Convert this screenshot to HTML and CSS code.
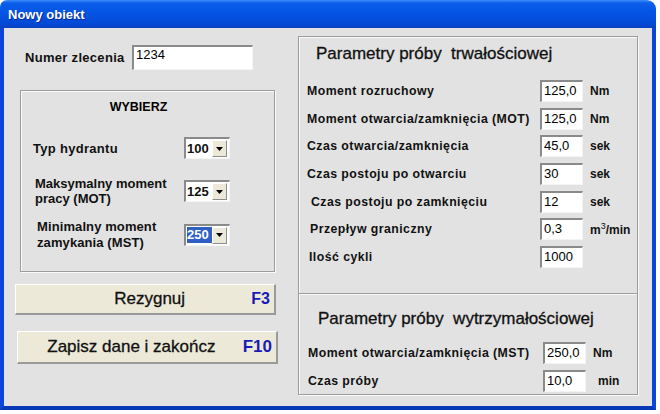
FILE: index.html
```html
<!DOCTYPE html>
<html lang="pl">

<head>
    <meta charset="UTF-8">
    <title>Nowy obiekt</title>
    <link rel="stylesheet" href="styles.css">
</head>

<body>
    <div class="window">
        <div class="titlebar">Nowy obiekt</div>
        <div class="frame">
            <div class="left">
                <div class="order-row">
                    <span class="lbl">Numer zlecenia</span>
                    <div class="field order-field">1234</div>
                </div>

                <div class="choose">
                    <div class="choose-title">WYBIERZ</div>
                    <div class="choose-row row-type">
                        <span class="lbl">Typ hydrantu</span>
                        <div class="combo"><span class="combo-val">100</span><span class="combo-btn"><svg width="7" height="4" viewBox="0 0 7 4"><path d="M0 0h7L3.5 4z" fill="#000"/></svg></span></div>
                    </div>
                    <div class="choose-row row-mot">
                        <span class="lbl lbl-mot">Maksymalny moment<br>pracy (MOT)</span>
                        <div class="combo"><span class="combo-val">125</span><span class="combo-btn"><svg width="7" height="4" viewBox="0 0 7 4"><path d="M0 0h7L3.5 4z" fill="#000"/></svg></span></div>
                    </div>
                    <div class="choose-row row-mst">
                        <span class="lbl lbl-indent">Minimalny moment<br>zamykania (MST)</span>
                        <div class="combo"><span class="combo-val selected">250</span><span class="combo-btn"><svg width="7" height="4" viewBox="0 0 7 4"><path d="M0 0h7L3.5 4z" fill="#000"/></svg></span></div>
                    </div>
                </div>

                <button class="btn btn-cancel"><span class="btn-text">Rezygnuj</span><span class="key">F3</span></button>
                <button class="btn btn-save"><span class="btn-text">Zapisz dane i zakończ</span><span class="key">F10</span></button>
            </div>

            <div class="params">
                <div class="section section-endurance">
                    <div class="section-title">Parametry próby&nbsp; trwałościowej</div>
                    <div class="param-row"><span class="plbl">Moment rozruchowy</span><div class="field pfield">125,0</div><span class="unit">Nm</span></div>
                    <div class="param-row"><span class="plbl">Moment otwarcia/zamknięcia (MOT)</span><div class="field pfield">125,0</div><span class="unit">Nm</span></div>
                    <div class="param-row"><span class="plbl">Czas otwarcia/zamknięcia</span><div class="field pfield">45,0</div><span class="unit">sek</span></div>
                    <div class="param-row"><span class="plbl">Czas postoju po otwarciu</span><div class="field pfield">30</div><span class="unit">sek</span></div>
                    <div class="param-row"><span class="plbl shift-4">Czas postoju po zamknięciu</span><div class="field pfield">12</div><span class="unit">sek</span></div>
                    <div class="param-row"><span class="plbl shift-3">Przepływ graniczny</span><div class="field pfield">0,3</div><span class="unit">m<sup>3</sup>/min</span></div>
                    <div class="param-row"><span class="plbl shift-2">Ilość cykli</span><div class="field pfield">1000</div></div>
                </div>
                <div class="section section-strength">
                    <div class="section-title">Parametry próby&nbsp; wytrzymałościowej</div>
                    <div class="param-row wide"><span class="plbl">Moment otwarcia/zamknięcia (MST)</span><div class="field pfield">250,0</div><span class="unit">Nm</span></div>
                    <div class="param-row wide"><span class="plbl">Czas próby</span><div class="field pfield">10,0</div><span class="unit unit-min">min</span></div>
                </div>
            </div>
        </div>
    </div>
</body>

</html>
```

FILE: styles.css
```css
body {
    margin: 0;
    background-color: #ffffff;
    font-family: "Liberation Sans", Arial, sans-serif;
}

.window {
    width: 656px;
    height: 410px;
    display: flex;
    flex-direction: column;
}

.titlebar {
    height: 28px;
    line-height: 30px;
    padding-left: 8px;
    color: white;
    font-size: 13px;
    font-weight: bold;
    border-radius: 7px 9px 0 0;
    background: linear-gradient(#3d8ffc 0, #0c5ee9 3px, #0454e4 45%, #0349d6 85%, #0a40c0 100%);
    text-shadow: 1px 1px 0 #0a2a90;
}

.frame {
    flex: 1;
    display: flex;
    background-color: #e2e2e2;
    border-left: 4px solid #0a46d8;
    border-right: 4px solid #0a46d8;
    border-bottom: 4px solid #0738b8;
}

/* lewa kolumna */
.left {
    width: 282px;
    margin-left: 12px;
    padding-top: 17px;
}

.lbl {
    font-size: 13px;
    font-weight: bold;
    letter-spacing: 0.3px;
    color: #111;
}

.order-row {
    display: flex;
    align-items: center;
    height: 25px;
    padding-left: 9px;
}

.order-row .lbl {
    width: 107px;
}

.field {
    background-color: white;
    border-top: 2px solid #8a8a8a;
    border-left: 2px solid #8a8a8a;
    border-right: 1px solid #f4f4f4;
    border-bottom: 1px solid #f4f4f4;
    box-sizing: border-box;
    font-size: 13px;
    padding-left: 2px;
    color: #000;
}

.order-field {
    width: 121px;
    height: 25px;
    line-height: 16px;
}

.choose {
    margin-top: 20px;
    margin-left: 4px;
    width: 255px;
    height: 182px;
    box-sizing: border-box;
    border: 1px solid #9c9c9c;
    box-shadow: inset 1px 1px 0 #fafafa, 1px 1px 0 #fafafa;
}

.choose-title {
    margin-top: 8px;
    padding-right: 18px;
    text-align: center;
    font-size: 12.5px;
    font-weight: bold;
    line-height: 16px;
}

.choose-row {
    display: flex;
    align-items: center;
    padding-left: 12px;
}

.choose-row .lbl {
    width: 151px;
    line-height: 15px;
    box-sizing: border-box;
}

.choose-row .lbl-mot {
    padding-left: 2px;
    letter-spacing: 0;
}

.choose-row .lbl-indent {
    padding-left: 4px;
    letter-spacing: 0.1px;
}

.row-type {
    margin-top: 22px;
    height: 22px;
}

.row-mot {
    margin-top: 17px;
    height: 30px;
}

.row-mst {
    height: 31px;
    margin-top: 13px;
}

.row-mst .lbl {
    line-height: 16px;
}

.combo {
    width: 46px;
    height: 22px;
    display: flex;
    align-items: center;
    box-sizing: border-box;
    background-color: white;
    border-top: 2px solid #8a8a8a;
    border-left: 2px solid #8a8a8a;
    border-right: 1px solid #f4f4f4;
    border-bottom: 1px solid #f4f4f4;
}

.combo-val {
    width: 25px;
    margin-left: 1px;
    font-size: 13px;
    font-weight: bold;
    line-height: 16px;
    color: #111;
}

.combo-val.selected {
    background-color: #2f5fc4;
    color: white;
}

.combo-btn {
    width: 15px;
    height: 17px;
    display: flex;
    align-items: center;
    justify-content: center;
    background-color: #ece9d8;
    border-top: 1px solid #ffffff;
    border-left: 1px solid #ffffff;
    border-right: 1px solid #8d8d8d;
    border-bottom: 1px solid #8d8d8d;
    box-sizing: border-box;
}

.btn {
    display: flex;
    align-items: center;
    box-sizing: border-box;
    width: 261px;
    padding: 0;
    background-color: #ece9d8;
    border-top: 1px solid #ffffff;
    border-left: 1px solid #ffffff;
    border-right: 2px solid #9a9a9a;
    border-bottom: 2px solid #9a9a9a;
    font-family: "Liberation Sans", Arial, sans-serif;
    font-size: 17px;
    color: #111;
}

.btn-text {
    flex: 1;
    text-align: center;
    -webkit-text-stroke: 0.3px #111;
}

.key {
    color: #1a1ab8;
    font-weight: bold;
}

.btn-cancel {
    margin-top: 12px;
    margin-left: -1px;
    height: 31px;
}

.btn-cancel .btn-text {
    padding-left: 32px;
}

.btn-cancel .key {
    font-size: 16px;
    padding-right: 4px;
}

.btn-save {
    margin-top: 16px;
    margin-left: 1px;
    height: 33px;
}

.btn-save .btn-text {
    padding-left: 20px;
}

.btn-save .key {
    font-size: 17px;
    padding-right: 4px;
    margin-left: 18px;
}

/* prawa kolumna */
.params {
    margin-top: 8px;
    width: 340px;
    height: 359px;
    box-sizing: border-box;
    border: 1px solid #9c9c9c;
    box-shadow: inset 1px 1px 0 #fafafa, 1px 1px 0 #fafafa;
}

.section {
    padding-left: 8px;
}

.section-endurance {
    height: 248px;
    padding-top: 8px;
    border-bottom: 1px solid #9c9c9c;
    box-shadow: 0 1px 0 #fafafa;
}

.section-strength {
    padding-top: 16px;
}

.section-title {
    font-size: 17px;
    line-height: 18px;
    padding-left: 9px;
    color: #111;
    -webkit-text-stroke: 0.3px #111;
}

.section-endurance .section-title {
    margin-bottom: 14px;
}

.section-strength .section-title {
    padding-left: 11px;
    margin-bottom: 11px;
}

.param-row {
    display: flex;
    align-items: center;
    height: 27.7px;
}

.section-strength .param-row {
    height: 28px;
}

.plbl {
    width: 233px;
    font-size: 12.3px;
    font-weight: bold;
    letter-spacing: 0.45px;
    color: #111;
    box-sizing: border-box;
    white-space: nowrap;
}

.wide .plbl {
    width: 236px;
    padding-left: 1px;
}

.shift-4 {
    padding-left: 4px;
}

.shift-3 {
    padding-left: 3px;
}

.shift-2 {
    padding-left: 2px;
}

.pfield {
    width: 43px;
    height: 22px;
    line-height: 17px;
    font-size: 13px;
}

.unit {
    margin-left: 7px;
    font-size: 12px;
    font-weight: bold;
    color: #111;
}

.unit sup {
    font-size: 9px;
    font-weight: normal;
}

.unit-min {
    margin-left: 12px;
}
```
